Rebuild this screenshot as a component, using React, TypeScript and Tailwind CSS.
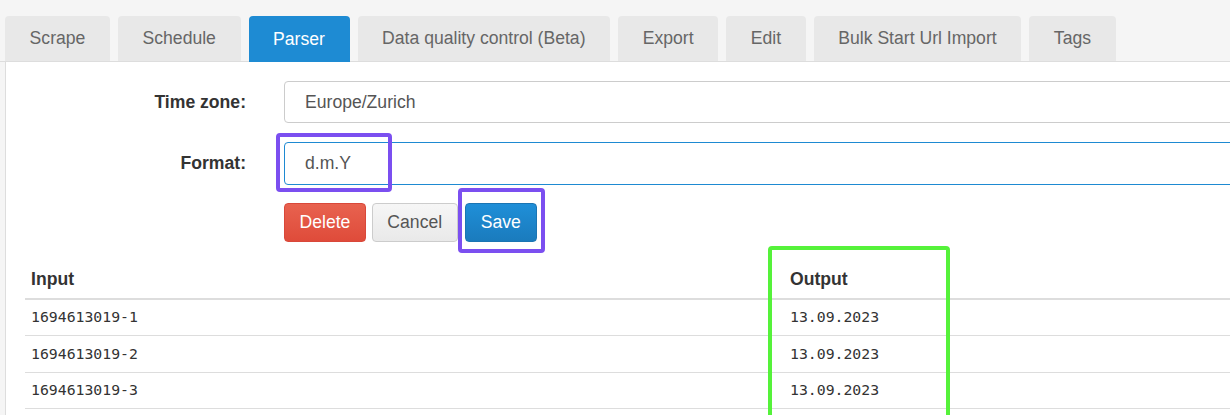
import React from 'react';

const tabs = ['Scrape', 'Schedule', 'Parser', 'Data quality control (Beta)', 'Export', 'Edit', 'Bulk Start Url Import', 'Tags'];

const rows = [
  { input: '1694613019-1', output: '13.09.2023' },
  { input: '1694613019-2', output: '13.09.2023' },
  { input: '1694613019-3', output: '13.09.2023' },
];

const sans = { fontFamily: '"Liberation Sans", Arial, sans-serif' };

const App: React.FC = () => {
  return (
    <div className="relative w-[1230px] h-[415px] overflow-hidden bg-[#f5f5f5] text-[17.6px] text-[#333]" style={sans}>
      {/* tab bar */}
      <div className="pl-[5px] pt-[16px] flex gap-[8px] border-b border-[#dddddd] w-[1300px]">
        {tabs.map((t) => (
          <div
            key={t}
            className={`h-[45px] -mb-px px-[24.6px] flex items-center rounded-t-[4px] ${t === 'Parser' ? 'bg-[#1e8bd3] text-white h-[46px]' : 'bg-[#e8e8e8] text-[#666]'}`}
          >
            {t}
          </div>
        ))}
      </div>

      {/* panel */}
      <div className="ml-[5px] bg-white border-l border-[#dddddd] w-[1300px] h-[400px] pt-[19px]">
        <div className="flex items-center">
          <label className="w-[240px] text-right font-bold">Time zone:</label>
          <div className="ml-[38px] flex-1 h-[42px] border border-[#cccccc] rounded-[4px] flex items-center pl-[20px] text-[#555]">
            Europe/Zurich
          </div>
        </div>
        <div className="flex items-center mt-[19px]">
          <label className="w-[240px] text-right font-bold">Format:</label>
          <div className="ml-[38px] flex-1 h-[43px] border border-[#1e8ad2] rounded-[4px] flex items-center pl-[20px] text-[#555]">
            d.m.Y
          </div>
        </div>
        <div className="flex mt-[18px] ml-[278px]">
          <button className="h-[39px] px-[14.5px] rounded-[4px] border border-[#d9483a] bg-gradient-to-b from-[#e8624f] to-[#df4b3a] text-white">
            Delete
          </button>
          <button className="h-[39px] ml-[6px] px-[14.5px] rounded-[4px] border border-[#cccccc] bg-gradient-to-b from-[#f6f6f6] to-[#e9e9e9] text-[#555]">
            Cancel
          </button>
          <button className="h-[39px] ml-[7px] px-[15px] rounded-[4px] border border-[#1b75b3] bg-gradient-to-b from-[#1f8fd8] to-[#1a7bbd] text-white">
            Save
          </button>
        </div>

        {/* table */}
        <table className="mt-[16px] ml-[19px] w-[1260px] border-collapse text-left">
          <thead>
            <tr className="border-b-2 border-[#dddddd]">
              <th className="w-[759px] pl-[6px] pt-[11px] pb-[9px] leading-[20px] font-bold">Input</th>
              <th className="pl-[6px] pt-[11px] pb-[9px] leading-[20px] font-bold">Output</th>
            </tr>
          </thead>
          <tbody style={{ fontFamily: '"DejaVu Sans Mono", monospace' }} className="text-[14.8px]">
            {rows.map((r) => (
              <tr key={r.input} className="border-b border-[#dddddd]">
                <td className="pl-[6px] h-[36.6px] py-0">{r.input}</td>
                <td className="pl-[6px] h-[36.6px] py-0">{r.output}</td>
              </tr>
            ))}
          </tbody>
        </table>
      </div>

      {/* annotation boxes */}
      <div className="absolute left-[276px] top-[133px] w-[116px] h-[59px] border-[4px] border-[#7b4ff0] rounded-[4px]" />
      <div className="absolute left-[458px] top-[188px] w-[87px] h-[65px] border-[4px] border-[#7b4ff0] rounded-[4px]" />
      <div className="absolute left-[768px] top-[246px] w-[182px] h-[200px] border-[4px] border-[#55f23a] rounded-[4px]" />
    </div>
  );
};

export default App;
